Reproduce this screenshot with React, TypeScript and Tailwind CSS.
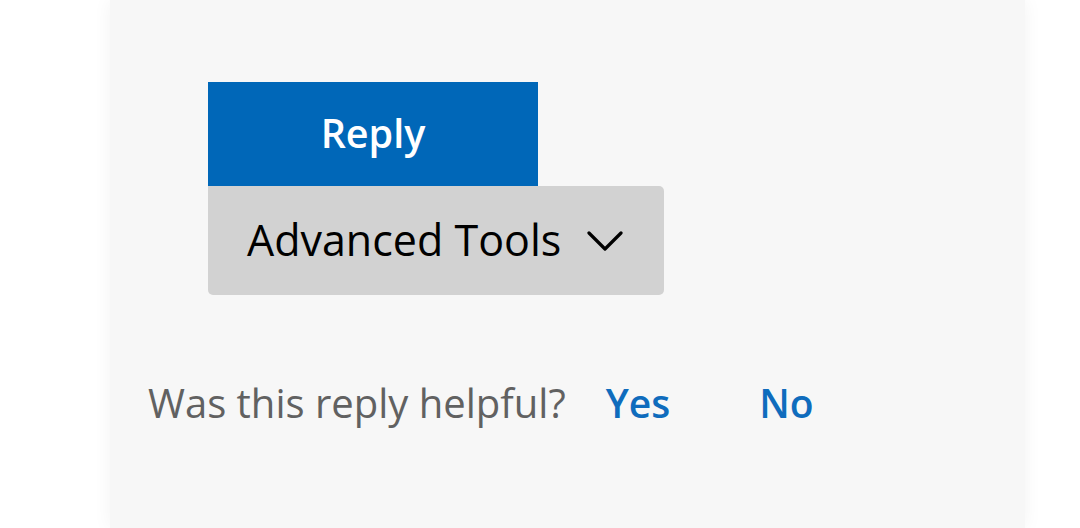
const Chevron = () => (
  <svg width="36" height="22" viewBox="0 0 36 22" fill="none" className="ml-[26px]">
    <path d="M2 3 L18 19 L34 3" stroke="currentColor" strokeWidth="3.2" strokeLinecap="round" strokeLinejoin="round" />
  </svg>
);

const App = () => {
  return (
    <div className="w-[1080px] h-[528px] bg-white overflow-hidden" style={{ fontFamily: '"Open Sans", "Noto Sans", sans-serif' }}>
      <div className="ml-[110px] w-[915px] h-[528px] bg-[#f7f7f7] shadow-[0_0_18px_rgba(0,0,0,0.05)]">
        <div className="pl-[98px] pt-[82px]">
          <button className="flex items-center justify-center w-[330px] h-[104px] bg-[#0067b8] text-white text-[39.5px] font-semibold">
            Reply
          </button>
          <button className="flex items-center w-[456px] h-[109px] bg-[#d2d2d2] rounded-b-[5px] rounded-tr-[5px] pl-[39px] text-black text-[43px]">
            <span>Advanced Tools</span>
            <Chevron />
          </button>
        </div>
        <div className="flex items-center pl-[38px] mt-[78px] text-[40px]">
          <span className="text-[#616161]">Was this reply helpful?</span>
          <button className="ml-[40px] text-[#0f6cbd] font-semibold text-[39px]">Yes</button>
          <button className="ml-[89px] text-[#0f6cbd] font-semibold text-[39px]">No</button>
        </div>
      </div>
    </div>
  );
};

export default App;
